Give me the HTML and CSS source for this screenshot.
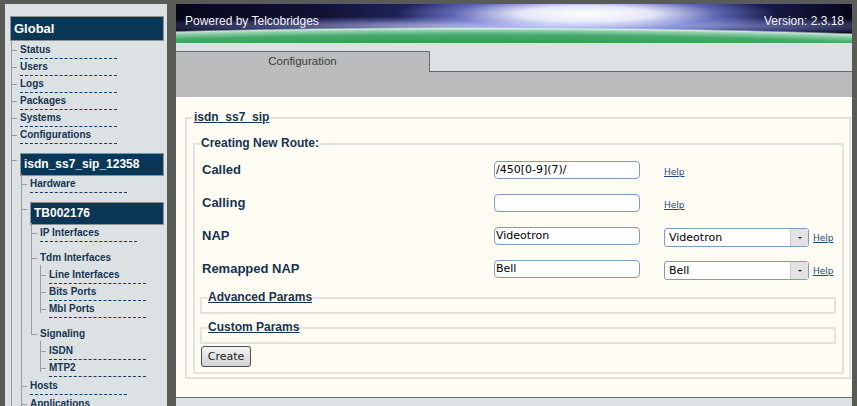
FILE: index.html
```html
<!DOCTYPE html>
<html>

<head>
	<meta charset="utf-8">
	<link rel="stylesheet" href="styles.css">
</head>

<body>
	<div class="menu">
		<div class="menubox global">Global</div>
		<ul class="tree top">
			<li><a class="leaf">Status</a></li>
			<li><a class="leaf">Users</a></li>
			<li><a class="leaf">Logs</a></li>
			<li><a class="leaf">Packages</a></li>
			<li><a class="leaf">Systems</a></li>
			<li><a class="leaf">Configurations</a></li>
			<li class="gap">
				<div class="menubox">isdn_ss7_sip_12358</div>
				<ul class="tree">
					<li><a class="leaf">Hardware</a></li>
					<li class="gap">
						<div class="menubox">TB002176</div>
						<ul class="tree">
							<li><a class="leaf">IP Interfaces</a></li>
							<li class="gap">
								<span class="node">Tdm Interfaces</span>
								<ul class="tree sub">
									<li><a class="leaf">Line Interfaces</a></li>
									<li><a class="leaf">Bits Ports</a></li>
									<li><a class="leaf">Mbl Ports</a></li>
								</ul>
							</li>
							<li class="gap">
								<span class="node">Signaling</span>
								<ul class="tree sub">
									<li><a class="leaf">ISDN</a></li>
									<li><a class="leaf">MTP2</a></li>
								</ul>
							</li>
						</ul>
					</li>
					<li class="near"><a class="leaf">Hosts</a></li>
					<li class="near"><a class="leaf">Applications</a></li>
					<li><a class="leaf">Routes</a></li>
				</ul>
			</li>
			<li><a class="leaf">Logout</a></li>
		</ul>
	</div>

	<div class="main">
		<div class="banner">
			<span>Powered by Telcobridges</span>
			<span>Version: 2.3.18</span>
		</div>
		<div class="tabs">
			<div class="tab">Configuration</div>
			<div class="tabfill"></div>
		</div>
		<div class="toolbar"></div>
		<div class="content">
			<fieldset class="box outer">
				<legend><a class="legendlink">isdn_ss7_sip</a></legend>
				<fieldset class="box inner">
					<legend>Creating New Route:</legend>
					<table class="form">
						<tr>
							<td class="label">Called</td>
							<td><input class="field" type="text" value="/450[0-9](7)/"></td>
							<td colspan="2"><a class="help">Help</a></td>
						</tr>
						<tr>
							<td class="label">Calling</td>
							<td><input class="field" type="text" value=""></td>
							<td colspan="2"><a class="help">Help</a></td>
						</tr>
						<tr>
							<td class="label">NAP</td>
							<td><input class="field" type="text" value="Videotron"></td>
							<td>
								<div class="combo">
									<select class="pick">
										<option>Videotron</option>
									</select>
									<span class="arrow"></span>
								</div>
							</td>
							<td><a class="help">Help</a></td>
						</tr>
						<tr>
							<td class="label">Remapped NAP</td>
							<td><input class="field" type="text" value="Bell"></td>
							<td>
								<div class="combo">
									<select class="pick">
										<option>Bell</option>
									</select>
									<span class="arrow"></span>
								</div>
							</td>
							<td><a class="help">Help</a></td>
						</tr>
					</table>
					<fieldset class="box params">
						<legend><a class="legendlink">Advanced Params</a></legend>
					</fieldset>
					<fieldset class="box params">
						<legend><a class="legendlink">Custom Params</a></legend>
					</fieldset>
					<button type="button" class="button">Create</button>
				</fieldset>
			</fieldset>
		</div>
	</div>
</body>

</html>
```

FILE: styles.css
```css
body {
	margin: 0;
	height: 406px;
	overflow: hidden;
	box-sizing: border-box;
	padding: 4px 5px 0 5px;
	display: flex;
	gap: 9px;
	background-color: #585b56;
	font-family: "Liberation Sans", Arial, sans-serif;
}

/* left menu */

.menu {
	flex: none;
	width: 162px;
	box-sizing: border-box;
	padding: 12px 3px 0 5px;
	background-color: #dce1e4;
	overflow: hidden;
}

.menubox {
	padding: 0 3px;
	border: 1px solid #8b9196;
	background-color: #0b3756;
	color: #ffffff;
	font-weight: bold;
	font-size: 12px;
	line-height: 21px;
}

.menubox.global {
	font-size: 13px;
	line-height: 23px;
}

.tree {
	list-style: none;
	margin: 1px 0 0 0;
	padding: 0 0 0 10px;
}

.tree.top {
	margin-top: 2px;
}

.tree.sub {
	padding-left: 9px;
}

.tree li {
	position: relative;
}

.tree li::before {
	content: "";
	position: absolute;
	left: -9px;
	top: -3px;
	width: 5px;
	height: 10px;
	border-left: 1px solid #9a9c9e;
	border-bottom: 1px solid #9a9c9e;
}

.tree li::after {
	content: "";
	position: absolute;
	left: -9px;
	top: 7px;
	bottom: -12px;
	border-left: 1px solid #9a9c9e;
}

.tree li:last-child::after {
	display: none;
}

.leaf {
	display: block;
	width: 97px;
	padding: 1px 0 2px 0;
	margin-bottom: 1px;
	border-bottom: 1px dashed #1c3a58;
	font-size: 10px;
	line-height: 12px;
	font-weight: bold;
	color: #173553;
}

.node {
	display: block;
	padding: 1px 0 3px 0;
	font-size: 10px;
	line-height: 12px;
	font-weight: bold;
	color: #173553;
}

.gap {
	margin-top: 9px;
}

.near {
	margin-top: 2px;
}

/* main column */

.main {
	flex: none;
	width: 676px;
	display: flex;
	flex-direction: column;
	background-color: #dce1e4;
}

.banner {
	height: 39px;
	box-sizing: border-box;
	padding: 10px 8px 0 9px;
	display: flex;
	justify-content: space-between;
	font-size: 12px;
	line-height: 14px;
	color: #f4f4ff;
	background:
		radial-gradient(ellipse 800px 50px at 300px 73px, #1c873c 0%, #2a9650 60%, #45aa6c 84%, #8fd0a8 93%, rgba(225, 245, 235, 0.9) 97%, rgba(200, 220, 230, 0) 100%),
		radial-gradient(ellipse 190px 22px at 410px 10px, #ffffff 0%, rgba(238, 240, 255, 0.95) 35%, rgba(150, 160, 245, 0.5) 70%, rgba(90, 100, 210, 0) 100%),
		radial-gradient(ellipse 440px 10px at 360px 22px, rgba(225, 230, 255, 0.85) 0%, rgba(150, 160, 235, 0.4) 60%, rgba(120, 130, 220, 0) 100%),
		linear-gradient(to right, #06061a 0%, #121236 22%, #2a2f72 42%, #3b42a6 58%, #24286a 78%, #07071a 100%);
}

.tabs {
	display: flex;
	padding-top: 8px;
}

.tab {
	width: 254px;
	height: 21px;
	box-sizing: border-box;
	border-top: 1px solid #6b6b6b;
	border-right: 1px solid #6b6b6b;
	background-color: #bbbcbd;
	text-align: center;
	font-size: 11.5px;
	line-height: 19px;
	color: #3c3c3c;
}

.tabfill {
	flex: 1;
	border-bottom: 1px solid #6b6b6b;
}

.toolbar {
	height: 25px;
	background-color: #bbbcbd;
}

.content {
	height: 301px;
	box-sizing: border-box;
	padding-top: 13px;
	border-bottom: 1px solid #6b6b6b;
	background-color: #fffcf3;
	overflow: hidden;
}

.box {
	margin: 0;
	border: 2px solid #e3e3df;
	min-width: 0;
}

.box legend {
	padding: 0 1px;
	font-size: 12px;
	line-height: 15px;
	font-weight: bold;
	color: #163350;
}

.legendlink {
	text-decoration: underline;
	color: #163350;
}

.outer {
	margin: 0 1px 0 9px;
	padding: 0 5px 3px 6px;
}

.inner {
	margin-top: 11px;
	padding: 0 6px 5px 6px;
}

.inner legend {
	padding: 0;
}

.form {
	margin-top: 2px;
	border-collapse: collapse;
}

.form td {
	padding: 0;
	height: 33px;
	vertical-align: middle;
}

.label {
	width: 292px;
	padding-left: 1px !important;
	font-size: 13px;
	font-weight: bold;
	color: #163350;
}

.form td:nth-child(2) {
	width: 170px;
}

.field {
	display: block;
	width: 146px;
	height: 18px;
	box-sizing: border-box;
	margin: 0;
	padding: 0 1px;
	border: 1px solid #809cbb;
	border-radius: 4px;
	background-color: #ffffff;
	font: 11px "DejaVu Sans", sans-serif;
	color: #000000;
}

.combo {
	position: relative;
	width: 145px;
	margin-top: 3px;
}

.pick {
	display: block;
	width: 145px;
	height: 19px;
	box-sizing: border-box;
	margin: 0;
	padding: 0 0 0 4px;
	border: 1px solid #809cbb;
	border-radius: 3px;
	background-color: #ffffff;
	font: 11px "DejaVu Sans", sans-serif;
	color: #000000;
	appearance: none;
	-webkit-appearance: none;
}

.arrow {
	position: absolute;
	right: 1px;
	top: 1px;
	width: 17px;
	height: 17px;
	border-left: 1px solid #c9ccd0;
	background-color: #e2e2e2;
}

.arrow::after {
	content: "";
	position: absolute;
	left: 7px;
	top: 8px;
	border-left: 2px solid transparent;
	border-right: 2px solid transparent;
	border-top: 2px solid #222222;
}

.help {
	padding-left: 4px;
	font: 9px "DejaVu Sans", sans-serif;
	text-decoration: underline;
	color: #1b4a7c;
}

.form td:nth-child(3) .help {
	padding-left: 0;
}

.params {
	margin: 5px 0 0 -1px;
	padding: 0 6px 7px 6px;
}

.params + .params {
	margin-top: 6px;
}

.button {
	display: block;
	margin-top: 2px;
	width: 50px;
	height: 21px;
	padding: 0;
	border: 1px solid #4d4d4d;
	border-radius: 3px;
	background: linear-gradient(#f2f2f2, #d4d4d4);
	font: 11px "DejaVu Sans", sans-serif;
	color: #222222;
}
```
